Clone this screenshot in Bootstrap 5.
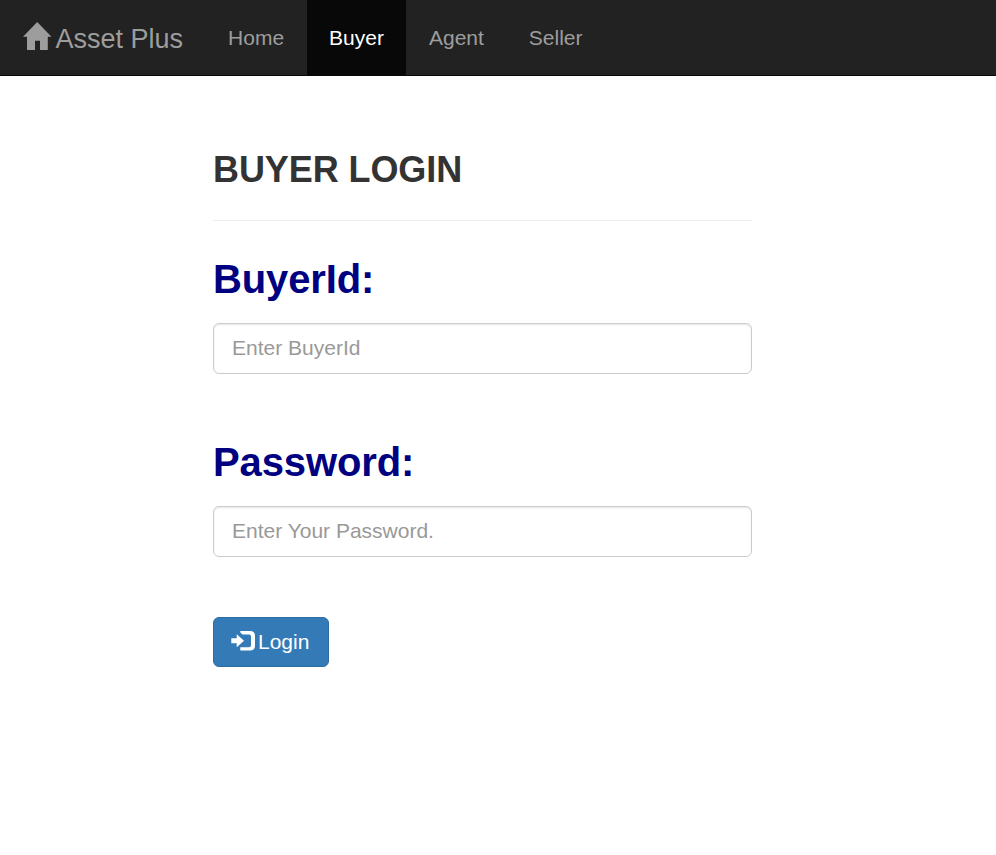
<!DOCTYPE html>
<html lang="en">
<head>
<meta charset="utf-8">
<meta name="viewport" content="width=device-width, initial-scale=1">
<title>Asset Plus - Buyer Login</title>
<link href="https://cdn.jsdelivr.net/npm/bootstrap@5.3.0/dist/css/bootstrap.min.css" rel="stylesheet">
<style>
body{font-family:"Liberation Sans",Arial,sans-serif;font-size:21px;line-height:30px;color:#333}
.top-nav{height:76px;background:#222;border-bottom:1px solid #080808}
.top-nav .navbar-brand{font-size:27px;line-height:30px;color:#9d9d9d;padding:24px 22.5px 21px 23px;margin:0}
.brand-icon{width:29px;height:28px;margin:-2px 3.5px 0 0}
.top-nav .nav-link{color:#9d9d9d;padding:23px 22.5px 22px;line-height:30px}
.top-nav .nav-link.active{color:#fff;background:#080808}
.login-area{width:539px;margin-left:213px;padding-top:71px}
.page-title{font-size:36px;line-height:46px;color:#333;letter-spacing:-.08px}
.rule{border-top:1px solid #eee;margin:27px 0 35px}
.field-label{font-size:40px;line-height:46px;color:navy;margin-bottom:21px;letter-spacing:-.12px}
.login-area .form-control{height:51px;font-size:21px;line-height:30px;padding:9px 18px 10px;border:1px solid #ccc;border-radius:6px;box-shadow:inset 0 1px 2px rgba(0,0,0,.1)}
.login-area .form-control::placeholder{color:#999;opacity:1}
.buyer-group{margin-bottom:65px}
.password-group{margin-bottom:60px}
.login-btn{height:50px;width:116px;font-size:21px;line-height:30px;padding:9px 17px;background:#337ab7;border:1px solid #2e6da4;border-radius:6px;color:#fff}
.login-icon{width:24px;height:20px;margin:3.5px 3px 0 0}
</style>
<script src="https://cdn.jsdelivr.net/npm/bootstrap@5.3.0/dist/js/bootstrap.bundle.min.js"></script>
</head>
<body>
<nav class="top-nav d-flex">
<a class="navbar-brand d-flex" href="#"><svg class="brand-icon" viewBox="0 0 29 28" fill="currentColor" aria-hidden="true"><path d="M14.2 0L28.5 14.7H24.8V28H17V18.8H12V28H4V14.7H0Z"/></svg><span>Asset Plus</span></a>
<ul class="nav flex-nowrap">
<li class="nav-item"><a class="nav-link" href="#">Home</a></li>
<li class="nav-item"><a class="nav-link active" href="#">Buyer</a></li>
<li class="nav-item"><a class="nav-link" href="#">Agent</a></li>
<li class="nav-item"><a class="nav-link" href="#">Seller</a></li>
</ul>
</nav>
<main class="login-area">
<h1 class="page-title fw-bold mb-0">BUYER LOGIN</h1>
<div class="rule"></div>
<form>
<div class="buyer-group">
<label class="field-label fw-bold d-block" for="buyer">BuyerId:</label>
<input class="form-control" id="buyer" type="text" placeholder="Enter BuyerId">
</div>
<div class="password-group">
<label class="field-label fw-bold d-block" for="pw">Password:</label>
<input class="form-control" id="pw" type="password" placeholder="Enter Your Password.">
</div>
<button class="btn login-btn d-flex align-items-start" type="button"><svg class="login-icon" viewBox="0 0 24 20" fill="currentColor" aria-hidden="true"><path d="M0.3 7.2H5.7V3.3L13 9.8L5.7 16.3V12.3H0.3Z"/><path d="M9.3 0H19Q24 0 24 5V14.5Q24 19.5 19 19.5H9.3V16.2H18Q20 16.2 20 14.2V5.5Q20 3.5 18 3.5H11.5L9.3 1.5Z"/></svg><span>Login</span></button>
</form>
</main>
</body>
</html>
